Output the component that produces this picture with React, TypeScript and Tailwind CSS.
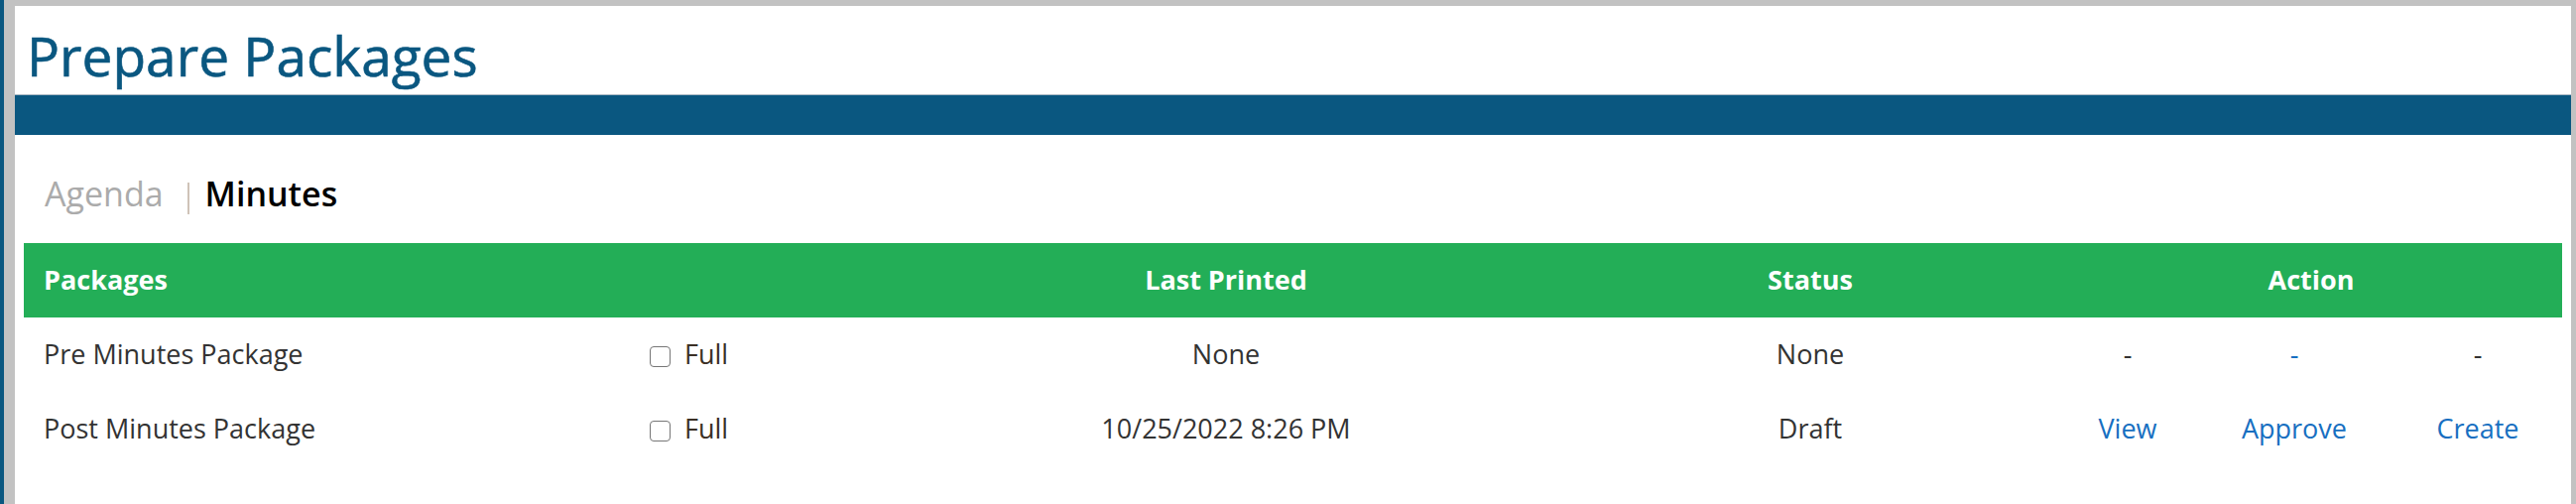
import React from "react";

type Row = {
  name: string;
  printed: string;
  status: string;
  actions: { label: string; link: boolean }[];
};

const rows: Row[] = [
  {
    name: "Pre Minutes Package",
    printed: "None",
    status: "None",
    actions: [
      { label: "-", link: false },
      { label: "-", link: true },
      { label: "-", link: false },
    ],
  },
  {
    name: "Post Minutes Package",
    printed: "10/25/2022 8:26 PM",
    status: "Draft",
    actions: [
      { label: "View", link: true },
      { label: "Approve", link: true },
      { label: "Create", link: true },
    ],
  },
];

const cols = "grid grid-cols-[609px_266px_674px_504px_136px_200px_170px]";

export default function App() {
  return (
    <div className="h-screen overflow-hidden bg-[#c2c2c2] border-l-4 border-[#0a5780] pl-[11px] pt-[6px] pr-[5px] font-['Open_Sans','Liberation_Sans',sans-serif]">
      <div className="h-full bg-white">
        <h1 className="pl-[12px] pt-[20px] text-[55px] leading-[60px] font-medium text-[#0a5780] [-webkit-text-stroke:0.6px_#0a5780]">
          Prepare Packages
        </h1>
        <div className="mt-[9px] h-[41px] bg-[#0a5780] border-t border-[#a7b6c2]" />

        <div className="mt-[37px] pl-[30px] flex items-start text-[34px] leading-[45px]">
          <span className="text-[#ababab]">Agenda</span>
          <span className="ml-[24px] mt-[11px] w-[2px] h-[32px] bg-[#cfc3b8]" />
          <span className="ml-[16px] text-black font-semibold">Minutes</span>
        </div>

        <div className="mt-[27px] mx-[9px]">
          <div className={`${cols} h-[75px] items-center bg-[#23ae57] text-white text-[27px] font-bold`}>
            <div className="col-span-2 pl-[20px]">Packages</div>
            <div className="text-center">Last Printed</div>
            <div className="text-center">Status</div>
            <div className="col-span-3 text-center">Action</div>
          </div>

          {rows.map((r) => (
            <div
              key={r.name}
              className={`${cols} h-[75px] items-center text-[27px] text-[#333333]`}
            >
              <div className="pl-[20px]">{r.name}</div>
              <label className="pl-[22px] flex items-center gap-[14px] text-[#3b3026]">
                <input
                  type="checkbox"
                  className="appearance-none w-[21px] h-[21px] mt-[3px] rounded-[4px] border-[1.5px] border-[#767676] bg-white"
                />
                <span>Full</span>
              </label>
              <div className="text-center">{r.printed}</div>
              <div className="text-center">{r.status}</div>
              {r.actions.map((a, i) => (
                <div
                  key={i}
                  className={`text-center ${a.link ? "text-[#176fc1]" : "text-[#333333]"}`}
                >
                  {a.label}
                </div>
              ))}
            </div>
          ))}
        </div>
      </div>
    </div>
  );
}
